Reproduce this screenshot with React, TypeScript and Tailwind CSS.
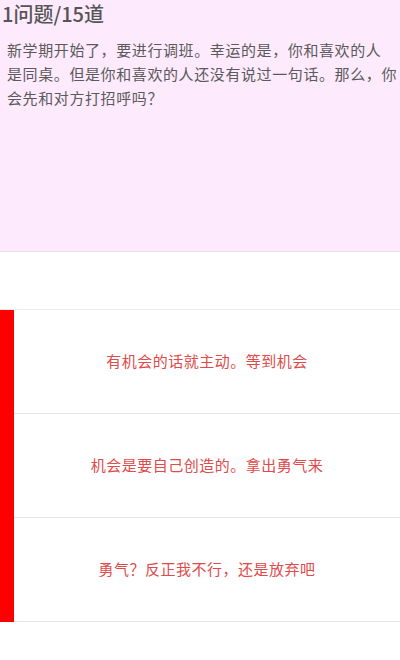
const FONT = { fontFamily: '"Noto Sans CJK SC", "Noto Sans", sans-serif' }

const OPTIONS = [
  '有机会的话就主动。等到机会',
  '机会是要自己创造的。拿出勇气来',
  '勇气？反正我不行，还是放弃吧',
]

export default function App() {
  return (
    <div className="w-[400px] h-[660px] bg-white overflow-hidden" style={FONT}>
      <div className="h-[252px] bg-[#fdeafd] border-b border-[#ebe3eb]">
        <h1 className="px-[2px] pt-[1px] text-[20px] leading-[25px] font-medium text-[#555]">
          1问题/15道
        </h1>
        <p className="mt-[12px] pl-[7px] text-[15px] leading-[24px] tracking-[0.6px] text-[#5a5a5a] whitespace-nowrap">
          新学期开始了，要进行调班。幸运的是，你和喜欢的人
          <br />
          是同桌。但是你和喜欢的人还没有说过一句话。那么，你
          <br />
          会先和对方打招呼吗？
        </p>
      </div>

      <div className="mt-[57px] flex border-t border-[#ececec]">
        <div className="w-[14px] bg-[#ff0000]" />
        <div className="flex-1 flex flex-col">
          {OPTIONS.map((o) => (
            <div
              key={o}
              className="h-[104px] flex items-center justify-center border-b border-[#e6e6e6] text-[15px] tracking-[0.5px] text-[#e04a4a]"
            >
              {o}
            </div>
          ))}
        </div>
      </div>
    </div>
  )
}
